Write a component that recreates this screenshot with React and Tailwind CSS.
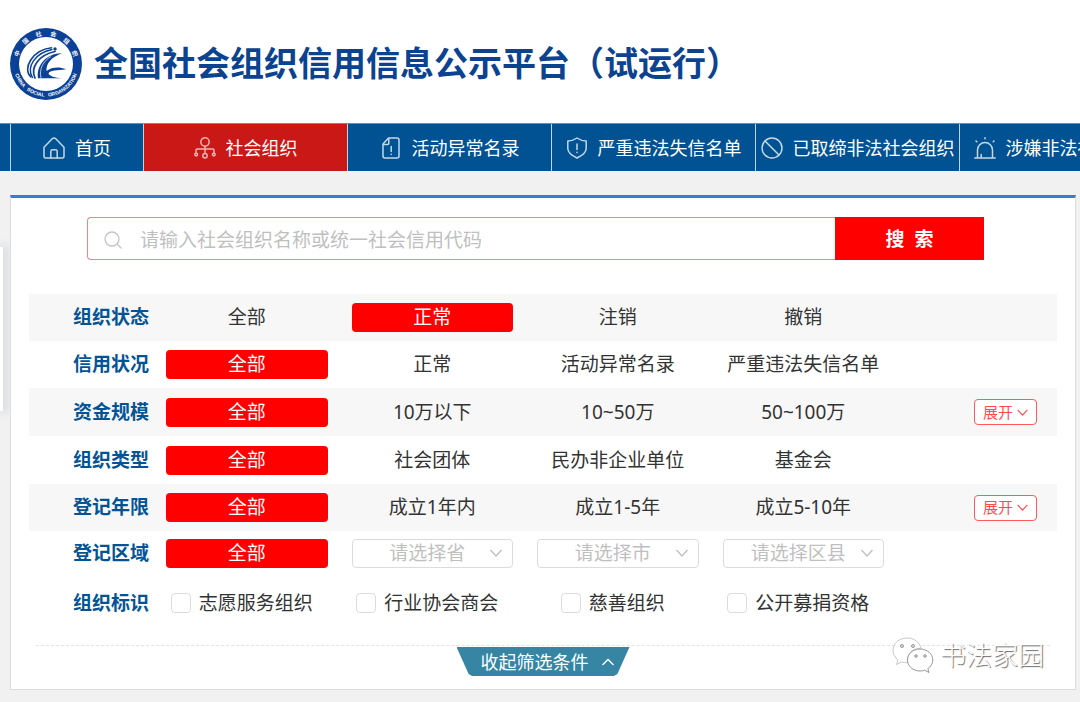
import React from "react";

const stroke = {
  fill: "none",
  stroke: "currentColor",
  strokeWidth: 1.5,
  strokeLinecap: "round",
  strokeLinejoin: "round",
};

const HomeIcon = () => (
  <svg viewBox="0 0 22 22" className="size-[22px] shrink-0 text-[#c4d8e8]" {...stroke}>
    <path d="M1 10.2 9.2 1.8Q11 .2 12.8 1.8L21 10.2V19.5Q21 21 19.5 21H2.5Q1 21 1 19.5Z" />
    <path d="M7.8 21V14.5Q7.8 12.8 9.5 12.8H12.5Q14.2 12.8 14.2 14.5V21" />
  </svg>
);

const OrgIcon = () => (
  <svg viewBox="0 0 22 22" className="size-[22px] shrink-0 text-[#f0b3b3]" {...stroke}>
    <circle cx="11" cy="5" r="4.2" />
    <path d="M11 9.2V16.5M2 16V13.2Q2 12 3.2 12H18.8Q20 12 20 13.2V16" />
    <circle cx="2.2" cy="17.6" r="1.4" />
    <circle cx="19.8" cy="17.6" r="1.4" />
    <circle cx="11" cy="18.8" r="2.2" />
  </svg>
);

const FileIcon = () => (
  <svg viewBox="0 0 22 22" className="size-[22px] shrink-0 text-[#c4d8e8]" {...stroke}>
    <path d="M8.5 1H17Q19 1 19 3V19Q19 21 17 21H5Q3 21 3 19V7Z" />
    <path d="M3.5 7.5H7.5Q8.8 7.5 8.8 6.2V1.5" />
    <path d="M11.2 9.5V14.5M11.2 17.2V17.6" />
  </svg>
);

const ShieldIcon = () => (
  <svg viewBox="0 0 22 22" className="size-[22px] shrink-0 text-[#c4d8e8]" {...stroke}>
    <path d="M11 1Q15 3.8 20.2 4V11.5Q20 17 11 21Q2 17 1.8 11.5V4Q7 3.8 11 1Z" />
    <path d="M11 7V12.5M11 15.2V15.5" />
  </svg>
);

const BanIcon = () => (
  <svg viewBox="0 0 22 22" className="size-[22px] shrink-0 text-[#c4d8e8]" {...stroke}>
    <circle cx="11" cy="11" r="10" />
    <path d="M4 4 18 18" />
  </svg>
);

const SirenIcon = () => (
  <svg viewBox="0 0 22 22" className="size-[22px] shrink-0 text-[#c4d8e8]" {...stroke}>
    <path d="M3.5 20.5V13A7.5 7.5 0 0 1 18.5 13V20.5M.8 21H21.2M7.2 17.5V20.5" />
    <path d="M11 .8V1.8M2 4 2.8 4.8M20 4 19.2 4.8" />
  </svg>
);

const Chevron = ({ className, up }) => (
  <svg viewBox="0 0 12 8" className={className} fill="none" stroke="currentColor" strokeWidth="1.3">
    <path d={up ? "M.5 7 6 1.500 11.500 7" : "M.5 1 6 7 11.500 1"} />
  </svg>
);

const Logo = () => (
  <svg viewBox="0 0 72 72" className="size-[72px] shrink-0" role="img" aria-label="中国社会组织">
    <defs>
      <path id="arcBottom" d="M3.5 36A32.5 32.5 0 0 0 68.5 36" />
    </defs>
    <circle cx="36" cy="36" r="36" fill="#0b4196" />
    <circle cx="36" cy="36" r="27" fill="#fff" />
    <g fill="#fff" fontWeight="700" textAnchor="middle">
      {["中", "国", "社", "会", "组", "织"].map((c, i) => (
        <text key={i} x="36" y="7.5" fontSize="6" transform={`rotate(${-70 + i * 28} 36 36)`}>
          {c}
        </text>
      ))}
      <text fontSize="5" fontFamily="Liberation Sans, sans-serif">
        <textPath href="#arcBottom" startOffset="50%" xmlSpace="preserve" style={{ whiteSpace: "pre" }}>
          {"CHINA   SOCIAL   ORGANIZATION"}
        </textPath>
      </text>
    </g>
    <g fill="#0b4196">
      <path d="M52 25.3C38 25 26 36 28 50.3H52C45 50 39.5 48 38.500 45.500C40 42 47 42.800 56 41.300C49 38.500 42 39 36.500 43C36 35 42 29 52 25.300Z" />
      <circle cx="45" cy="21" r="1.7" />
    </g>
    <g fill="none" stroke="#0b4196" strokeLinecap="round">
      <path d="M21 49C12 41 22 22 41.5 19.800" strokeWidth="1.6" />
      <path d="M22.5 49.500C16 39 25 25 42 21.500" strokeWidth="1.4" />
      <path d="M25 50C20 39 29 27 45 23.500" strokeWidth="1.7" />
    </g>
    <path d="M31 50C29 41 33 33 41 28.500" fill="none" stroke="#fff" strokeWidth=".7" />
  </svg>
);

const navItems = [
  { label: "社会组织", icon: <OrgIcon />, active: true },
  { label: "活动异常名录", icon: <FileIcon /> },
  { label: "严重违法失信名单", icon: <ShieldIcon /> },
  { label: "已取缔非法社会组织", icon: <BanIcon /> },
  { label: "涉嫌非法社会组织", icon: <SirenIcon /> },
];

const filters = [
  { label: "组织状态", options: ["全部", "正常", "注销", "撤销"], selected: 1, height: "h-[47px]", shaded: true },
  { label: "信用状况", options: ["全部", "正常", "活动异常名录", "严重违法失信名单"], selected: 0, height: "h-[47px]" },
  { label: "资金规模", options: ["全部", "10万以下", "10~50万", "50~100万"], selected: 0, height: "h-12", shaded: true, more: true },
  { label: "组织类型", options: ["全部", "社会团体", "民办非企业单位", "基金会"], selected: 0, height: "h-12" },
  { label: "登记年限", options: ["全部", "成立1年内", "成立1-5年", "成立5-10年"], selected: 0, height: "h-[47px]", shaded: true, more: true },
];

function FilterRow({ label, height, shaded, more, children }) {
  return (
    <div role="group" aria-label={label} className={`flex items-center ${height} ${shaded ? "bg-[#f7f7f7]" : ""}`}>
      <span className="ml-11 w-[93px] shrink-0 font-bold text-[#045495]">{label}</span>
      <div className="grid min-w-0 flex-1 grid-cols-4 gap-6 whitespace-nowrap">{children}</div>
      <div className="flex w-[173px] shrink-0 justify-end pr-5">
        {more && (
          <button type="button" className="flex h-[26px] w-[63px] items-center justify-center gap-1 rounded border border-[#ff5a5a] bg-white text-[15px] text-[#ff4d4d]">
            展开
            <Chevron className="h-[7px] w-[11px]" />
          </button>
        )}
      </div>
    </div>
  );
}

function Option({ selected, children }) {
  return (
    <button
      type="button"
      aria-pressed={Boolean(selected)}
      className={`flex h-[29px] items-center justify-center rounded ${selected ? "bg-[#fe0000] text-white" : "text-[#333]"}`}
    >
      {children}
    </button>
  );
}

function NavLink({ icon, label, active, width }) {
  return (
    <a
      href="#"
      className={`flex shrink-0 items-center justify-center gap-[10px] border-l border-[#bfd4e4] text-lg whitespace-nowrap text-white ${width} ${active ? "bg-[#ca1816]" : ""}`}
    >
      {icon}
      {label}
    </a>
  );
}

export default function App() {
  return (
    <div className="relative min-h-screen overflow-x-hidden bg-[#f1f1f1] font-['Noto_Sans','Noto_Sans_CJK_SC',sans-serif] text-[19px] text-[#333]">
      <header className="flex h-[123px] items-center gap-3 bg-white pt-1 pl-[10px]">
        <Logo />
        <h1 className="text-[34px] font-bold whitespace-nowrap text-[#0b4391]">全国社会组织信用信息公示平台（试运行）</h1>
      </header>

      <nav className="flex h-12 overflow-hidden border-t border-[#5b91bb] bg-[#005293] pl-[10px]">
        <NavLink icon={<HomeIcon />} label="首页" width="w-[133px]" />
        {navItems.map((item) => (
          <NavLink key={item.label} {...item} width="w-[204px]" />
        ))}
      </nav>

      <aside className="absolute top-[247px] left-0 h-[164px] w-[3px] bg-white shadow-[2px_0_10px_2px_#cfd6dc]" />

      <main className="relative mt-6 mr-1 ml-[10px] border border-t-[3px] border-[#dcdcdc] border-t-[#347ddd] bg-white pb-[13px]">
        <form className="mt-[19px] mr-[91px] ml-[76px] flex h-[43px]" onSubmit={(e) => e.preventDefault()}>
          <label className="flex min-w-0 flex-1 items-center gap-[18px] rounded-l border border-r-0 border-[#f58585] pt-0.5 pl-4 text-[#c4c4c4]">
            <svg viewBox="0 0 18 18" className="size-[18px] shrink-0" fill="none" stroke="currentColor" strokeWidth="1.3">
              <circle cx="8" cy="8" r="7" />
              <path d="m13 13 4.5 4.5" />
            </svg>
            <input
              type="text"
              aria-label="搜索社会组织"
              placeholder="请输入社会组织名称或统一社会信用代码"
              className="h-full min-w-0 flex-1 outline-none placeholder:text-[#bfbfbf]"
            />
          </label>
          <button type="submit" className="w-[149px] bg-[#fe0000] pt-0.5 font-bold whitespace-pre text-white">
            {"搜  索"}
          </button>
        </form>

        <section className="mx-[18px] mt-[34px]">
          {filters.map((f) => (
            <FilterRow key={f.label} {...f}>
              {f.options.map((o, i) => (
                <Option key={o} selected={i === f.selected}>
                  {o}
                </Option>
              ))}
            </FilterRow>
          ))}

          <FilterRow label="登记区域" height="h-[45px]">
            <Option selected>全部</Option>
            {["请选择省", "请选择市", "请选择区县"].map((text) => (
              <div key={text} className="relative">
                <select
                  aria-label={text}
                  className="block h-[29px] w-full appearance-none rounded border border-[#dcdcdc] bg-white pr-[10px] text-center leading-[27px] text-[#bfbfbf] [text-align-last:center]"
                >
                  <option>{text}</option>
                </select>
                <Chevron className="pointer-events-none absolute top-[10px] right-[11px] h-2 w-3 text-[#bfbfbf]" />
              </div>
            ))}
          </FilterRow>

          <FilterRow label="组织标识" height="h-[54px]">
            {["志愿服务组织", "行业协会商会", "慈善组织", "公开募捐资格"].map((text) => (
              <label key={text} className="flex items-center justify-center gap-2 pr-[10px]">
                <input type="checkbox" className="size-5 shrink-0 appearance-none rounded-sm border border-[#dcdcdc] bg-white checked:bg-[#fe0000]" />
                {text}
              </label>
            ))}
          </FilterRow>
        </section>

        <div className="mx-[25px] mt-[15px] flex justify-center border-t border-dashed border-[#e4e4e4] pt-px">
          <button
            type="button"
            className="flex h-[29px] w-[173px] items-center justify-center gap-[13px] bg-[#3685a2] pl-2 text-lg text-white [clip-path:polygon(0_0,100%_0,93%_93%,91%_100%,9%_100%,7%_93%)]"
          >
            收起筛选条件
            <Chevron up className="h-2 w-3" />
          </button>
        </div>

        <div className="absolute right-[31px] bottom-4 flex items-center gap-1.5">
          <svg viewBox="0 0 42 36" className="h-9 w-[42px]" fill="#fff" stroke="#999" strokeWidth="1">
            <path d="M15 1C7 1 1 6.500 1 13.500c0 4 2 7 5 9.500l-1.500 4.500 5-2.500c2 .6 4 .8 6 .7C14 17 21 11 29 11.300 27.500 5 22 1 15 1Z" stroke="#c8c8c8" />
            <path d="M28 12c-7 0-12.500 4.800-12.500 11S21 34 28 34c1.800 0 3.200-.3 4.600-.8L37 35.500l-1.200-3.800c3-2.200 5-5 5-8.700C40.800 16.800 35 12 28 12Z" />
            <g fill="#ddd">
              <circle cx="10" cy="9" r="1.5" />
              <circle cx="21" cy="9" r="1.5" />
              <circle cx="24" cy="19" r="1.3" />
              <circle cx="33" cy="19" r="1.3" />
            </g>
          </svg>
          <span className="text-[26px] leading-9 font-light text-white [text-shadow:1px_1px_1px_#666]">书法家园</span>
        </div>
      </main>
    </div>
  );
}
